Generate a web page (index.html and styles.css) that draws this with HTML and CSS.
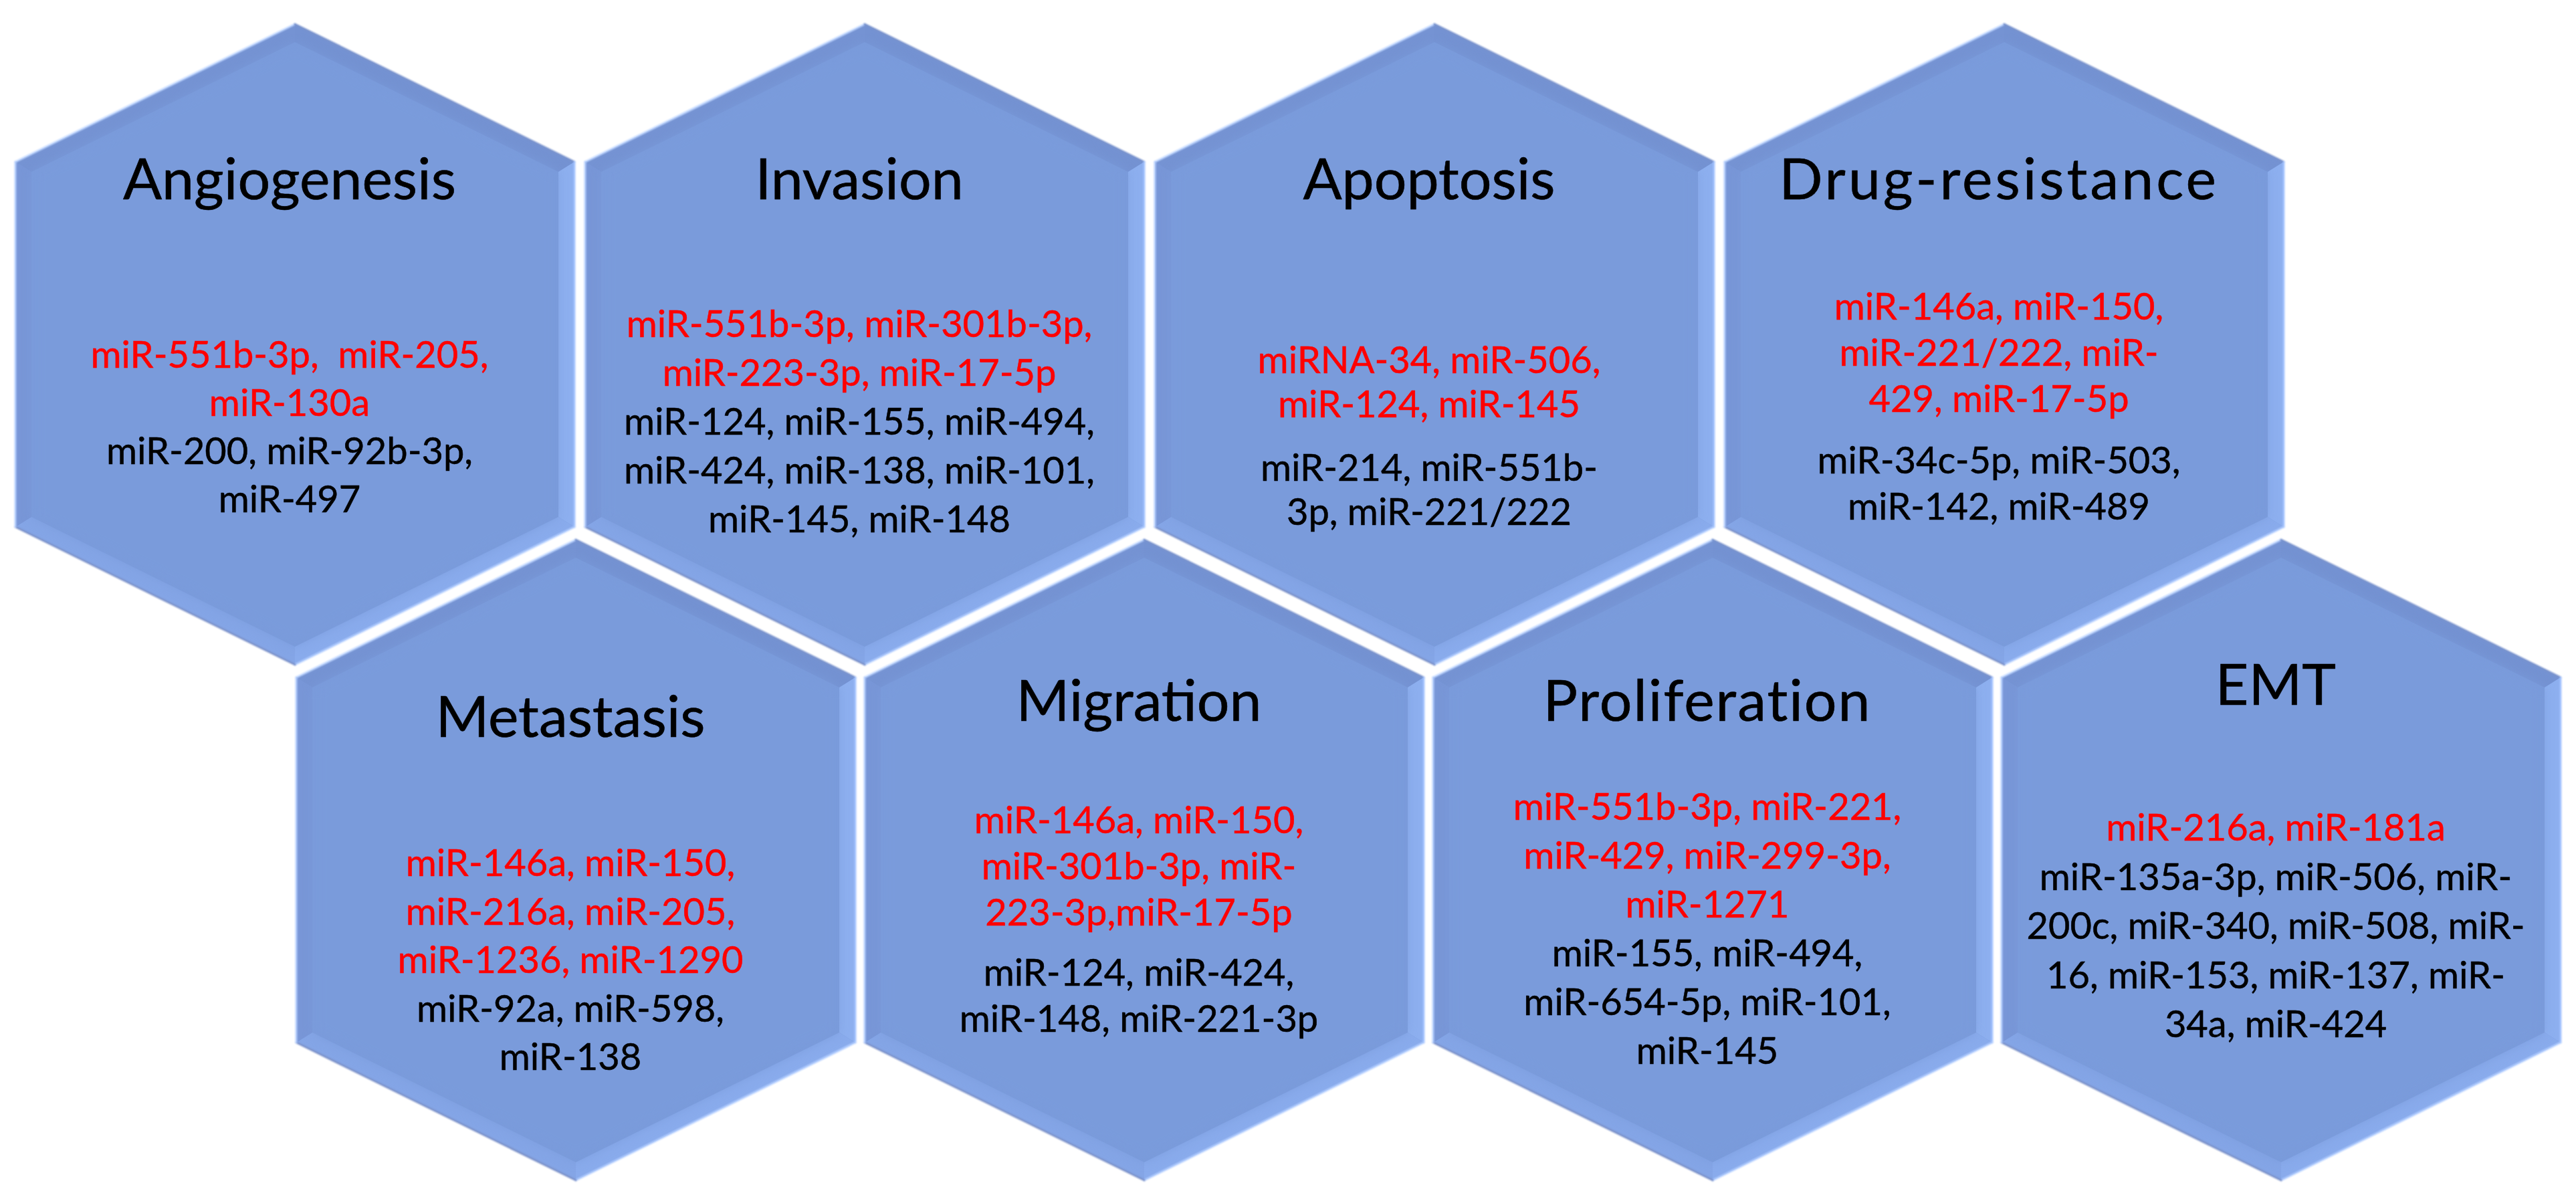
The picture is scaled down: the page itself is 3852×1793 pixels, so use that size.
FILE: index.html
```html
<!DOCTYPE html>
<html lang="en">
<head>
<meta charset="utf-8">
<title>miRNAs in cancer hallmarks</title>
<link rel="stylesheet" href="styles.css">
</head>
<body>
<svg class="svg-defs" width="0" height="0" aria-hidden="true">
  <defs>
    <clipPath id="hexclip">
      <polygon points="418,0 836,206 836,752 418,958 0,752 0,206"/>
    </clipPath>
    <filter id="soft" x="-10%" y="-10%" width="120%" height="120%" color-interpolation-filters="sRGB">
      <feGaussianBlur stdDeviation="8"/>
    </filter>
    <filter id="rimblur" x="-10%" y="-10%" width="120%" height="120%" color-interpolation-filters="sRGB">
      <feGaussianBlur stdDeviation="1.3"/>
    </filter>
    <g id="hexbg">
      <g clip-path="url(#hexclip)">
        <rect x="0" y="0" width="836" height="958" fill="#7a9bdb"/>
        <polygon points="0,206 418,0 418,27 24,221" fill="#7593d3"/>
        <polygon points="418,0 836,206 812,221 418,27" fill="#7492d2"/>
        <polygon points="836,206 836,752 812,737 812,221" fill="#8dafef"/>
        <polygon points="836,752 418,958 418,931 812,737" fill="#89abec"/>
        <polygon points="418,958 0,752 24,737 418,931" fill="#84a5e6"/>
        <polygon points="0,752 0,206 24,221 24,737" fill="#7896d7"/>
        <polygon points="418,30 809,222 809,736 418,928 27,736 27,222" fill="#7a9bdb" filter="url(#soft)"/>
      </g>
      <g filter="url(#rimblur)" stroke-width="3" fill="none" stroke-linecap="round">
        <line x1="0" y1="206" x2="418" y2="0" stroke="#c2d8ff"/>
        <line x1="418" y1="0" x2="836" y2="206" stroke="#7b94cd"/>
        <line x1="836" y1="206" x2="836" y2="752" stroke="#a6c4ff"/>
        <line x1="836" y1="752" x2="418" y2="958" stroke="#b3ceff"/>
        <line x1="418" y1="958" x2="0" y2="752" stroke="#7d93ca"/>
        <line x1="0" y1="752" x2="0" y2="206" stroke="#b5cffe"/>
      </g>
    </g>
  </defs>
</svg>

<main class="honeycomb">
  <div class="hex-row hex-row-top">
    <section class="hex hex-angio">
      <svg class="hex-shape" viewBox="0 0 836 958" aria-hidden="true"><use href="#hexbg"/></svg>
      <div class="hex-content">
        <h2 class="hex-title">Angiogenesis</h2>
        <p class="mir mir-up">miR-551b-3p,&nbsp; miR-205,<br>miR-130a</p>
        <p class="mir mir-down">miR-200, miR-92b-3p,<br>miR-497</p>
      </div>
    </section>
    <section class="hex hex-invasion">
      <svg class="hex-shape" viewBox="0 0 836 958" aria-hidden="true"><use href="#hexbg"/></svg>
      <div class="hex-content">
        <h2 class="hex-title">Invasion</h2>
        <p class="mir mir-up">miR-551b-3p, miR-301b-3p,<br>miR-223-3p, miR-17-5p</p>
        <p class="mir mir-down">miR-124, miR-155, miR-494,<br>miR-424, miR-138, miR-101,<br>miR-145, miR-148</p>
      </div>
    </section>
    <section class="hex hex-apoptosis">
      <svg class="hex-shape" viewBox="0 0 836 958" aria-hidden="true"><use href="#hexbg"/></svg>
      <div class="hex-content">
        <h2 class="hex-title">Apoptosis</h2>
        <p class="mir mir-up">miRNA-34, miR-506,<br>miR-124, miR-145</p>
        <p class="mir mir-down">miR-214, miR-551b-<br>3p, miR-221/222</p>
      </div>
    </section>
    <section class="hex hex-drug">
      <svg class="hex-shape" viewBox="0 0 836 958" aria-hidden="true"><use href="#hexbg"/></svg>
      <div class="hex-content">
        <h2 class="hex-title">Drug-resistance</h2>
        <p class="mir mir-up">miR-146a, miR-150,<br>miR-221/222, miR-<br>429, miR-17-5p</p>
        <p class="mir mir-down">miR-34c-5p, miR-503,<br>miR-142, miR-489</p>
      </div>
    </section>
  </div>

  <div class="hex-row hex-row-bottom">
    <section class="hex hex-metastasis">
      <svg class="hex-shape" viewBox="0 0 836 958" aria-hidden="true"><use href="#hexbg"/></svg>
      <div class="hex-content">
        <h2 class="hex-title">Metastasis</h2>
        <p class="mir mir-up">miR-146a, miR-150,<br>miR-216a, miR-205,<br>miR-1236, miR-1290</p>
        <p class="mir mir-down">miR-92a, miR-598,<br>miR-138</p>
      </div>
    </section>
    <section class="hex hex-migration">
      <svg class="hex-shape" viewBox="0 0 836 958" aria-hidden="true"><use href="#hexbg"/></svg>
      <div class="hex-content">
        <h2 class="hex-title">Migration</h2>
        <p class="mir mir-up">miR-146a, miR-150,<br>miR-301b-3p, miR-<br>223-3p,miR-17-5p</p>
        <p class="mir mir-down">miR-124, miR-424,<br>miR-148, miR-221-3p</p>
      </div>
    </section>
    <section class="hex hex-proliferation">
      <svg class="hex-shape" viewBox="0 0 836 958" aria-hidden="true"><use href="#hexbg"/></svg>
      <div class="hex-content">
        <h2 class="hex-title">Proliferation</h2>
        <p class="mir mir-up">miR-551b-3p, miR-221,<br>miR-429, miR-299-3p,<br>miR-1271</p>
        <p class="mir mir-down">miR-155, miR-494,<br>miR-654-5p, miR-101,<br>miR-145</p>
      </div>
    </section>
    <section class="hex hex-emt">
      <svg class="hex-shape" viewBox="0 0 836 958" aria-hidden="true"><use href="#hexbg"/></svg>
      <div class="hex-content">
        <h2 class="hex-title">EMT</h2>
        <p class="mir mir-up">miR-216a, miR-181a</p>
        <p class="mir mir-down">miR-135a-3p, miR-506, miR-<br>200c, miR-340, miR-508, miR-<br>16, miR-153, miR-137, miR-<br>34a, miR-424</p>
      </div>
    </section>
  </div>
</main>
</body>
</html>
```

FILE: styles.css
```css
html, body {
  margin: 0;
  padding: 0;
  background: #ffffff;
}

body {
  width: 3852px;
  height: 1793px;
  overflow: hidden;
  font-family: Lato, "Open Sans", "DejaVu Sans", sans-serif;
  color: #000000;
}

.svg-defs {
  display: block;
  width: 0;
  height: 0;
  overflow: hidden;
}

.honeycomb {
  padding: 36px 0 0 23px;
}

.hex-row {
  display: flex;
  gap: 16px;
}

.hex-row-bottom {
  margin-top: -187px;
  margin-left: 420px;
  gap: 14px;
}

.hex {
  display: grid;
  width: 836px;
  height: 958px;
  flex: 0 0 auto;
  margin: 0;
}

.hex-shape {
  grid-area: 1 / 1;
  width: 836px;
  height: 958px;
  overflow: visible;
}

.hex-content {
  grid-area: 1 / 1;
  z-index: 1;
  display: flex;
  flex-direction: column;
  align-items: center;
  text-align: center;
  padding-top: var(--title-top, 181px);
  padding-right: 16px;
  --lh: 72px;
}

.hex-title {
  margin: 0;
  font-size: 86px;
  line-height: 96px;
  font-weight: 400;
  white-space: nowrap;
  letter-spacing: var(--title-track, 0px);
  -webkit-text-stroke: 0.6px #000000;
}

.mir {
  margin: 0;
  font-size: 56px;
  line-height: var(--lh);
  white-space: nowrap;
  -webkit-text-stroke: 0.5px currentColor;
}

.mir-up {
  color: #ff0000;
  margin-top: var(--body-top, 180px);
}

.mir-down {
  color: #000000;
  margin-top: var(--para-gap, 0px);
}

/* per-card vertical placement */
.hex-angio .hex-content { --lh: 72px; --body-top: 180px; }
.hex-invasion .hex-content { --lh: 73px; --body-top: 133px; }
.hex-apoptosis .hex-content { --lh: 66px; --body-top: 191px; --para-gap: 29px; }
.hex-drug .hex-content { --lh: 69px; --body-top: 109px; --para-gap: 23px; --title-track: 4px; }

.hex-metastasis .hex-content { --title-top: 214px; --lh: 72.5px; --body-top: 136px; }
.hex-migration .hex-content { --title-top: 190px; --lh: 69px; --body-top: 97px; --para-gap: 21px; }
.hex-proliferation .hex-content { --title-top: 190px; --lh: 73px; --body-top: 75px; --title-track: 2px; }
.hex-emt .hex-content { --title-top: 166px; --lh: 73.5px; --body-top: 130px; }
```
